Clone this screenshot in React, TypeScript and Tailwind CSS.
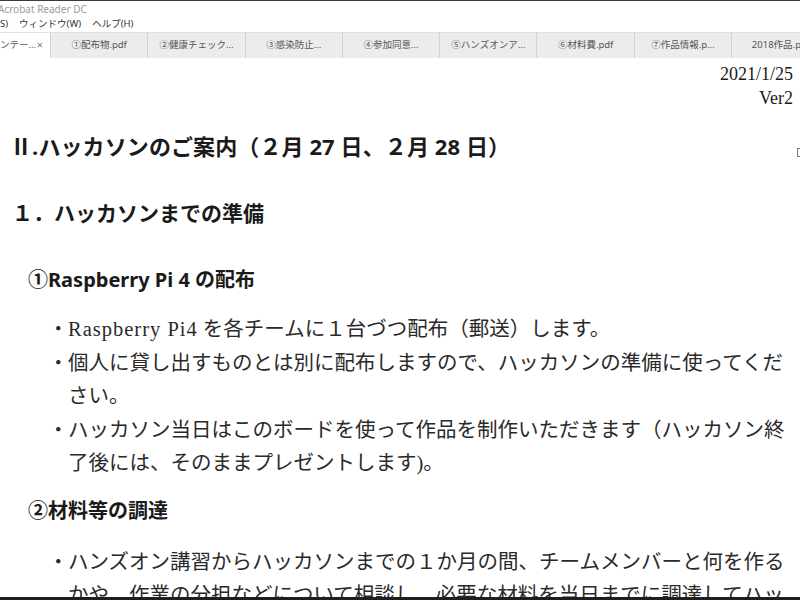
import React from "react"

const tabs = [
  "①配布物.pdf",
  "②健康チェック...",
  "③感染防止...",
  "④参加同意...",
  "⑤ハンズオンア...",
  "⑥材料費.pdf",
  "⑦作品情報.p...",
  "2018作品.p...",
]

const gothic = { fontFamily: '"Noto Sans", "Noto Sans CJK JP", sans-serif' }
const mincho = { fontFamily: '"Liberation Serif", "Noto Sans CJK JP", serif' }

function Bullet({ lines }: { lines: React.ReactNode[] }) {
  return (
    <div className="flex">
      <span className="w-[20px] shrink-0 text-center">・</span>
      <div>
        {lines.map((l, i) => (
          <div key={i} className="whitespace-nowrap">
            {l}
          </div>
        ))}
      </div>
    </div>
  )
}

export default function App() {
  return (
    <div className="w-[800px] h-[600px] flex flex-col overflow-hidden bg-white" style={gothic}>
      {/* Title bar */}
      <div className="h-[16px] shrink-0 border-t border-[#3a3a3a] bg-white flex items-center">
        <span className="-ml-[2px] text-[10px] leading-none text-[#9a9a9a]">Acrobat Reader DC</span>
      </div>

      {/* Menu bar */}
      <div className="h-[16px] shrink-0 flex items-center gap-[11px] text-[9.5px] text-[#333] leading-none">
        <span>S)</span>
        <span>ウィンドウ(W)</span>
        <span>ヘルプ(H)</span>
      </div>

      {/* Tabs */}
      <div className="h-[26px] shrink-0 flex bg-[#ececec] border-t border-[#e0e0e0] text-[9.5px] text-[#555] overflow-hidden">
        <div className="w-[50px] shrink-0 bg-white flex items-center justify-between pr-[7px] whitespace-nowrap">
          <span>ンテー...</span>
          <span className="text-[#777] text-[11px]">×</span>
        </div>
        {tabs.map((t) => (
          <div
            key={t}
            className="w-[97.3px] shrink-0 border-l border-[#d2d2d2] flex items-center justify-center whitespace-nowrap"
          >
            {t}
          </div>
        ))}
      </div>

      {/* Document */}
      <div className="flex-1 overflow-hidden bg-white text-[#1a1a1a]">
        <div className="pt-[4px] pr-[7px] text-right text-[18px] leading-[24px]" style={mincho}>
          <div>2021/1/25</div>
          <div>Ver2</div>
        </div>

        <div className="mt-[21px] flex items-center justify-between pl-[10px]">
          <h1 className="text-[22px] leading-[30px] font-bold tracking-[0.1px] whitespace-nowrap">
            Ⅱ.ハッカソンのご案内（２月 27 日、２月 28 日）
          </h1>
          <span className="mt-[12px] w-[3px] h-[9px] border border-r-0 border-[#777]" />
        </div>

        <h2 className="mt-[37px] pl-[12px] text-[21px] leading-[30px] font-bold whitespace-nowrap">
          １．ハッカソンまでの準備
        </h2>

        <h3 className="mt-[37px] pl-[28px] text-[20px] leading-[30px] font-bold whitespace-nowrap">
          ①Raspberry Pi 4 の配布
        </h3>

        <div className="mt-[18px] pl-[48px] text-[20.5px] leading-[33.5px] text-[#2a2a2a]" style={mincho}>
          <Bullet
            lines={[
              <>
                <span className="tracking-[1px]">Raspberry Pi4</span> を各チームに１台づつ配布（郵送）します。
              </>,
            ]}
          />
          <Bullet lines={["個人に貸し出すものとは別に配布しますので、ハッカソンの準備に使ってくだ", "さい。"]} />
          <Bullet
            lines={["ハッカソン当日はこのボードを使って作品を制作いただきます（ハッカソン終", "了後には、そのままプレゼントします)。"]}
          />
        </div>

        <h3 className="mt-[15px] pl-[28px] text-[20px] leading-[30px] font-bold whitespace-nowrap">
          ②材料等の調達
        </h3>

        <div className="mt-[20px] pl-[48px] text-[20.5px] leading-[33.5px] text-[#2a2a2a]" style={mincho}>
          <Bullet
            lines={[
              "ハンズオン講習からハッカソンまでの１か月の間、チームメンバーと何を作る",
              "かや、作業の分担などについて相談し、必要な材料を当日までに調達してハッ",
            ]}
          />
        </div>
      </div>

      <div className="h-[3px] shrink-0 bg-[#1e1e1e]" />
    </div>
  )
}
